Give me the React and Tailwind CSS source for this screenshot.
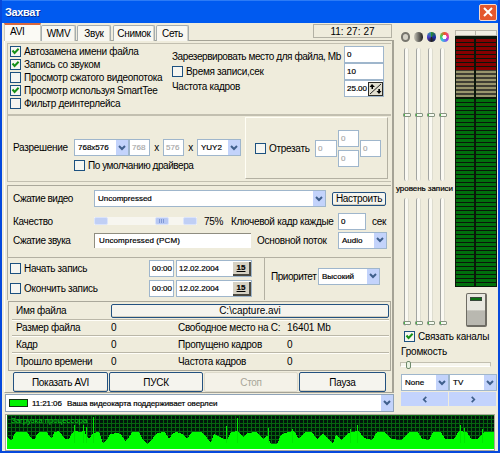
import React from 'react';
import clsx from 'clsx';

const Check = ({ on, className }) => (
    <div className={clsx('w-[11px] h-[11px] shrink-0 border border-[#1c5180] bg-[#f6f6f1]', className)}>
        {on && (
            <svg viewBox="0 0 9 9" className="block w-[9px] h-[9px]">
                <path d="M1.5 3.5 L3.6 6 L7.6 1.8" fill="none" stroke="#169016" strokeWidth="2" />
            </svg>
        )}
    </div>
);

const Label = ({ className, children }) => (
    <span className={clsx('block shrink-0 whitespace-nowrap', className)}>{children}</span>
);

const Field = ({ className, children }) => (
    <div className={clsx('shrink-0 border border-[#9fb6cc] bg-white whitespace-nowrap text-[8px] tracking-normal [-webkit-text-stroke:0.2px] flex items-center pl-[2px]', className)}>
        {children}
    </div>
);

const Arrow = ({ className }) => (
    <div className={clsx('w-[12px] shrink-0 self-stretch bg-[#c3d3fb] flex items-center justify-center', className)}>
        <svg viewBox="0 0 8 6" className="w-[8px] h-[6px]">
            <path d="M1 1 L4 4 L7 1" fill="none" stroke="#3f5f8c" strokeWidth="2" />
        </svg>
    </div>
);

const Combo = ({ className, children }) => (
    <div className={clsx('shrink-0 border border-[#9fb6cc] bg-white flex items-center justify-between pl-[3px] text-[8px] tracking-normal [-webkit-text-stroke:0.2px] whitespace-nowrap', className)}>
        <span>{children}</span>
        <Arrow />
    </div>
);

const Button = ({ className, disabled, children }) => (
    <div
        className={clsx(
            'shrink-0 flex items-center justify-center rounded-[2px] border whitespace-nowrap',
            disabled ? 'border-[#dddacb] bg-[#f4f2e8] text-[#a8a698]' : 'border-[#235180] bg-[#f5f4ee] shadow-[inset_0_-1px_0_#d3cfc0]',
            className
        )}
    >
        {children}
    </div>
);

const Tab = ({ className, children }) => (
    <div className={clsx('h-[16px] shrink-0 rounded-t-[2px] border border-b-0 border-[#a5adb0] bg-[#f8f7f1] flex items-center justify-center shadow-[inset_-1px_0_0_#d6d4c8]', className)}>
        {children}
    </div>
);

const DateRow = ({ label, className }) => (
    <div className={clsx('flex items-center h-[17px]', className)}>
        <Check className="ml-[2px]" />
        <Label className="ml-[3px] w-[125px]">{label}</Label>
        <Field className="w-[25px] h-[17px] pl-[1px]">00:00</Field>
        <Field className="ml-[2px] w-[76px] h-[17px] justify-between">
            <span>12.02.2004</span>
            <span className="w-[18px] h-[14px] bg-[#d5d1c4] border-r-2 border-b-2 border-[#4c4a42] flex items-center justify-center text-[8px] font-bold underline">
                15
            </span>
        </Field>
    </div>
);

const StatRow = ({ name, value, name2, value2, className }) => (
    <div className={clsx('flex items-center ml-[3px] w-[377px] border-t border-[#bab7a8] shadow-[inset_0_1px_0_#fffef8]', className)}>
        <Label className="ml-[4px] w-[95px]">{name}</Label>
        <Label className="w-[67px]">{value}</Label>
        <Label className="w-[109px]">{name2}</Label>
        <Label className="tracking-[-0.1px]">{value2}</Label>
    </div>
);

const Track = ({ thumb, className }) => (
    <div className={clsx('w-[5px] flex flex-col items-center rounded-[2px] border-l border-l-[#a3a5a2] border-r border-r-[#dddccf] bg-[#faf9f2]', className)}>
        <div className={clsx('w-[8px] h-[4px] shrink-0 rounded-[1px] border border-[#879482] bg-[#f6faf0] shadow-[inset_1px_0_0_#49b749]', thumb)} />
    </div>
);

const Meter = () => (
    <svg viewBox="0 0 42 257" shapeRendering="crispEdges" className="block w-[42px] h-[257px]">
        <rect width="42" height="257" fill="#0a160a" />
        <rect width="42" height="6" fill="#b8b6a8" />
        <rect x="1" y="1" width="19" height="4" fill="#f1efe2" />
        <rect x="21" y="1" width="20" height="4" fill="#f1efe2" />
        <rect x="1" y="38" width="18" height="28" fill="#3f3e33" />
        <rect x="21" y="38" width="20" height="28" fill="#3f3e33" />
        {Array.from({ length: 62 }, (_, i) => {
            const y = 9 + i * 4;
            const olive = y > 37 && y < 66;
            const fill = y < 38 ? '#860000' : olive ? '#98956c' : '#00700c';
            return (
                <g key={i} fill={fill}>
                    <rect x="1" y={y} width="18" height={olive ? 2 : 3} />
                    <rect x="21" y={y} width="20" height={olive ? 2 : 3} />
                </g>
            );
        })}
    </svg>
);

// x, y pairs of the cpu load curve
const load = [
    0, 22, 3, 25, 6, 24, 7, 19, 10, 17, 20, 17, 22, 20, 25, 24, 28, 24, 30, 19, 33, 17, 40, 17, 43, 22, 45, 24, 47, 17, 52, 16, 55, 20,
    58, 24, 62, 24, 65, 18, 68, 16, 74, 17, 77, 14, 79, 20, 82, 24, 86, 18, 92, 17, 96, 28, 100, 25, 103, 19, 110, 18, 114, 19, 118, 26,
    121, 24, 125, 17, 132, 17, 136, 25, 141, 29, 146, 23, 150, 18, 158, 17, 162, 24, 166, 18, 170, 17, 175, 19, 180, 24, 185, 17, 195, 17,
    200, 23, 204, 28, 207, 19, 213, 22, 220, 25, 224, 17, 231, 16, 236, 22, 240, 18, 250, 17, 256, 24, 260, 20, 264, 29, 270, 29, 274, 20,
    281, 17, 287, 16, 292, 24, 298, 17, 305, 17, 310, 24, 316, 19, 321, 24, 326, 28, 329, 20, 335, 25, 340, 19, 344, 17, 352, 16, 357, 23,
    365, 25, 370, 17, 378, 17, 384, 24, 394, 25, 400, 20, 402, 17, 411, 17, 415, 24, 422, 25, 426, 17, 434, 17, 438, 24, 447, 24, 452, 16,
    460, 17, 464, 24, 470, 24, 474, 20, 478, 17, 487, 17,
];
const spikes = [[67, 10], [76, 10], [79, 12], [86, 2], [219, 11], [230, 3], [261, 13], [285, 14], [343, 14], [350, 10], [453, 10], [457, 13], [475, 14]];

const Load = () => {
    const points = [];
    for (let i = 0; i < load.length; i += 2) points.push(`${load[i]},${load[i + 1]}`);
    return (
        <svg viewBox="0 0 487 34" shapeRendering="crispEdges" className="block w-[487px] h-[34px]">
            <defs>
                <pattern id="grid" width="4" height="4" patternUnits="userSpaceOnUse">
                    <rect width="4" height="4" fill="#00160a" />
                    <path d="M0 0.5 H4 M0.5 0 V4" stroke="#06640f" />
                </pattern>
            </defs>
            <rect width="487" height="34" fill="url(#grid)" />
            <polygon points={`0,34 ${points.join(' ')} 487,34`} fill="#00fc00" />
            {spikes.map(([x, y]) => (
                <rect key={x} x={x} y={y} width="1" height={28 - y} fill="#00e800" />
            ))}
        </svg>
    );
};

const Tabs = () => (
    <div className="flex items-end h-[18px] pl-[2px] text-[10px]">
        <div className="w-[37px] h-[18px] shrink-0 border-t-2 border-t-[#d9673d] border-x border-x-[#c5c8c0] bg-[#fbfaf5] pl-[5px] leading-[14px]">AVI</div>
        <Tab className="w-[35px]">WMV</Tab>
        <Tab className="w-[34px] ml-[1px]">Звук</Tab>
        <Tab className="w-[42px] ml-[2px]">Снимок</Tab>
        <Tab className="w-[33px] ml-[1px]">Сеть</Tab>
        <div className="ml-[124px] mb-[3px] w-[79px] h-[14px] border border-[#b3b1a4] flex items-center justify-center tracking-[0.05px]">11: 27: 27</div>
    </div>
);

const FileOptions = () => (
    <div className="ml-[3px] w-[384px] h-[72px] border border-[#c2bfb0] border-r-0 flex pt-[1px]">
        <div className="pl-[2px] w-[164px]">
            {[
                ['Автозамена имени файла', true],
                ['Запись со звуком', true],
                ['Просмотр сжатого видеопотока', false],
                ['Просмотр используя SmartTee', true],
                ['Фильтр деинтерлейса', false],
            ].map(([text, on]) => (
                <div key={text} className="flex items-center h-[13px]">
                    <Check on={on} />
                    <Label className="ml-[3px] tracking-[-0.28px]">{text}</Label>
                </div>
            ))}
        </div>
        <div className="w-[172px] pt-[4px]">
            <Label className="h-[15px] leading-[15px] tracking-[-0.42px]">Зарезервировать место для файла, Mb</Label>
            <div className="flex items-center h-[15px]">
                <Check />
                <Label className="ml-[3px]">Время записи,сек</Label>
            </div>
            <Label className="h-[15px] leading-[15px]">Частота кадров</Label>
        </div>
        <div className="pt-[1px]">
            <Field className="w-[40px] h-[17px]">0</Field>
            <Field className="w-[40px] h-[17px]">10</Field>
            <Field className="w-[40px] h-[17px] justify-between">
                25.00
                <svg viewBox="0 0 15 14" className="w-[15px] h-[14px]">
                    <rect width="15" height="14" fill="#2e2d28" />
                    <rect width="13" height="12" x="1" y="1" fill="#e2dfd0" />
                    <path d="M2 12 L13 2" stroke="#222" />
                    <path d="M4 2 L1.5 5 H3.5 V7 H5 V5 H7 Z M11 12 L8.5 9 H10.3 V7 H12 V9 H13.5 Z" fill="#000" />
                </svg>
            </Field>
        </div>
    </div>
);

const Resolution = () => (
    <div className="ml-[3px] w-[384px] h-[67px] border-y border-l border-[#c2bfb0] flex">
        <div className="w-[237px] pt-[23px] pl-[5px]">
            <div className="flex items-center h-[17px]">
                <Label className="w-[61px]">Разрешение</Label>
                <Combo className="w-[55px] h-[17px]">768x576</Combo>
                <Field className="w-[21px] h-[17px] text-[#aaa]">768</Field>
                <Label className="w-[13px] text-center">x</Label>
                <Field className="w-[21px] h-[17px] text-[#aaa]">576</Field>
                <Label className="w-[13px] text-center">x</Label>
                <Combo className="w-[44px] h-[17px]">YUY2</Combo>
            </div>
            <div className="flex items-center h-[19px] pl-[61px]">
                <Check />
                <Label className="ml-[3px] tracking-[-0.45px]">По умолчанию драйвера</Label>
            </div>
        </div>
        <div className="mt-[1px] w-[143px] h-[62px] border border-[#b3b0a2] border-t-[#fffef5] border-l-[#fffef5] flex items-center pl-[9px]">
            <Check />
            <Label className="ml-[3px] w-[46px]">Отрезать</Label>
            <Field className="w-[22px] h-[17px] text-[#aaa]">0</Field>
            <div className="flex flex-col gap-[3px] ml-[1px]">
                <Field className="w-[21px] h-[17px] text-[#aaa]">0</Field>
                <Field className="w-[21px] h-[17px] text-[#aaa]">0</Field>
            </div>
            <Field className="ml-[1px] w-[21px] h-[17px] text-[#aaa]">0</Field>
        </div>
    </div>
);

const Compression = () => (
    <div className="ml-[3px] w-[384px] h-[72px] mt-[3px] border-t border-l border-[#aaa89b] pl-[5px] pt-[4px]">
        <div className="flex items-center h-[17px]">
            <Label className="w-[81px] tracking-[-0.5px]">Сжатие видео</Label>
            <Combo className="w-[232px] h-[17px]">Uncompressed</Combo>
            <Button className="ml-[6px] w-[54px] h-[14px]">Настроить</Button>
        </div>
        <div className="flex items-center h-[18px] mt-[5px]">
            <Label className="w-[81px]">Качество</Label>
            <div className="w-[103px] h-[8px] bg-[#f7f6f0] flex justify-between">
                <div className="w-[14px] rounded-[2px] bg-[#c0cff5] border border-[#dbe4fb]" />
                <div className="w-[14px] ml-[32px] rounded-[2px] bg-[#b7c8f3] border border-[#dbe4fb] flex items-center justify-center gap-[1px]">
                    <i className="w-px h-[4px] bg-[#8199d8]" />
                    <i className="w-px h-[4px] bg-[#8199d8]" />
                    <i className="w-px h-[4px] bg-[#8199d8]" />
                </div>
                <div className="w-[14px] rounded-[2px] bg-[#c0cff5] border border-[#dbe4fb]" />
            </div>
            <Label className="ml-[7px] w-[27px]">75%</Label>
            <Label className="w-[107px]">Ключевой кадр каждые</Label>
            <Field className="w-[28px] h-[17px]">0</Field>
            <Label className="ml-[6px]">сек</Label>
        </div>
        <div className="flex items-center h-[18px] mt-[1px]">
            <Label className="w-[81px] tracking-[-0.45px]">Сжатие звука</Label>
            <div className="w-[157px] h-[15px] bg-white border-t border-l border-[#8f8d80] pl-[4px] text-[8px] tracking-[0.1px] [-webkit-text-stroke:0.2px] leading-[14px]">Uncompressed (PCM)</div>
            <Label className="ml-[6px] w-[81px]">Основной поток</Label>
            <Combo className="w-[49px] h-[17px]">Audio</Combo>
        </div>
    </div>
);

const Schedule = () => (
    <div className="ml-[3px] w-[384px] h-[43px] border-t border-l border-[#b3b0a2] flex">
        <div className="w-[256px] pt-[2px]">
            <DateRow label="Начать запись" />
            <DateRow label="Окончить запись" className="mt-[3px]" />
        </div>
        <div className="flex items-center border-l border-[#b3b0a2] pl-[6px] pb-[6px]">
            <Label className="w-[47px] tracking-[-0.45px]">Приоритет</Label>
            <Combo className="w-[62px] h-[17px]">Высокий</Combo>
        </div>
    </div>
);

const Stats = () => (
    <div className="ml-[4px] mt-[1px] w-[383px] h-[70px] border border-[#aaa89b]">
        <div className="flex items-center h-[17px] pl-[7px]">
            <Label className="w-[95px]">Имя файла</Label>
            <Button className="w-[278px] h-[14px] tracking-normal">C:\capture.avi</Button>
        </div>
        <StatRow className="h-[16px]" name="Размер файла" value="0" name2="Свободное место на  C:" value2="16401 Mb" />
        <StatRow className="h-[17px]" name="Кадр" value="0" name2="Пропущено кадров" value2="0" />
        <StatRow className="h-[18px]" name="Прошло времени" value="0" name2="Частота кадров" value2="0" />
    </div>
);

const Mixer = () => (
    <div className="w-[103px] shrink-0 flex flex-col">
        <div className="flex h-[304px]">
            <div className="w-[59px] shrink-0 pt-[8px]">
                <div className="flex gap-[4px] pl-[6px] h-[12px] items-center">
                    <i className="w-[9px] h-[10px] rounded-full border-2 border-[#77766e] bg-[#d5d3c8]" />
                    <i className="w-[9px] h-[10px] rounded-full bg-linear-to-r from-[#c9c7ba] to-[#222]" />
                    <i className="w-[9px] h-[10px] rounded-full bg-[conic-gradient(#278a35,#1c2fae,#222,#4a3fd0,#2a9a9a)]" />
                    <i className="w-[9px] h-[10px] rounded-full bg-[radial-gradient(#fff_30%,transparent_35%),conic-gradient(#ef5a2a,#e8389a,#7d4ff0,#35c1e0,#49cf4a,#ef5a2a)]" />
                </div>
                <div className="flex gap-[7px] pl-[9px] mt-[5px]">
                    {[0, 1, 2, 3].map((i) => (
                        <Track key={i} className="h-[133px]" thumb="mt-[65px]" />
                    ))}
                </div>
                <Label className="pl-px text-[8px] tracking-[-0.05px] [-webkit-text-stroke:0.2px] leading-[16px] h-[17px]">уровень записи</Label>
                <div className="flex gap-[7px] pl-[9px]">
                    {[0, 1, 2, 3].map((i) => (
                        <Track key={i} className="h-[128px]" thumb="mt-[123px]" />
                    ))}
                </div>
            </div>
            <div className="pt-[7px] pl-[1px]">
                <Meter />
                <div className="mt-[6px] ml-[11px] w-[21px] h-[34px] rounded-[2px] border border-[#6e6c64] border-r-2 border-b-2 bg-linear-to-b from-[#e8e7df] from-50% to-[#b9b8b0] to-55% pt-[3px]">
                    <div className="mx-auto w-[12px] h-[4px] bg-[#0b7012] border border-[#37463a]" />
                </div>
            </div>
        </div>
        <div className="flex items-center h-[18px] pl-[9px]">
            <Check on />
            <Label className="ml-[3px] tracking-[-0.25px]">Связать каналы</Label>
        </div>
        <Label className="pl-[6px] h-[14px] leading-[14px] tracking-[-0.2px]">Громкость</Label>
        <div className="ml-[5px] mt-[3px] w-[91px] h-[5px] border border-[#c2bfb0] border-b-[#fff] bg-[#f7f6ee] flex items-center">
            <div className="ml-[5px] w-[5px] h-[8px] shrink-0 rounded-[2px] border border-[#6f8a6c] bg-[#e9f3e2]" />
        </div>
        <div className="flex mt-[7px] ml-[6px]">
            <Combo className="w-[48px] h-[17px]">None</Combo>
            <Combo className="w-[48px] h-[17px]">TV</Combo>
        </div>
        <div className="flex gap-px ml-[6px] mt-[1px] w-[95px] h-[14px]">
            {['M5 1 L2 4 L5 7', 'M2 1 L5 4 L2 7'].map((d) => (
                <div key={d} className="flex-1 bg-[#c3d3fd] flex items-center justify-center">
                    <svg viewBox="0 0 7 8" className="w-[6px] h-[7px]">
                        <path d={d} fill="none" stroke="#3f5f8c" strokeWidth="2" />
                    </svg>
                </div>
            ))}
        </div>
    </div>
);

const App = () => (
    <div className="w-[500px] h-[453px] overflow-hidden bg-[#efecdc] flex flex-col border-l-2 border-r-2 border-b-2 border-[#0649dc] text-black text-[10px] leading-[13px] tracking-[-0.3px] font-['Liberation_Sans',sans-serif]">
        <div className="h-[23px] shrink-0 bg-[#005af0] border-t border-[#2c7bf6] flex items-center justify-between pl-[3px] pr-px">
            <span className="text-white font-bold text-[11px] tracking-[-0.35px] [text-shadow:1px_1px_0_#0b2f93]">Захват</span>
            <div className="w-[18px] h-[17px] rounded-[2px] border border-[#f5d9cd] bg-[#e4572e] flex items-center justify-center">
                <svg viewBox="0 0 10 10" className="w-[10px] h-[10px]">
                    <path d="M1 1 L9 9 M9 1 L1 9" stroke="#fff" strokeWidth="2" />
                </svg>
            </div>
        </div>
        <div className="flex h-[390px] shrink-0">
            <div className="w-[393px] shrink-0">
                <Tabs />
                <div className="ml-[2px] w-[390px] h-[353px] border border-[#a5a396] border-l-[#fff] border-r-2 pt-[2px] -mt-px">
                    <div className="-ml-px">
                        <FileOptions />
                        <Resolution />
                        <Compression />
                        <Schedule />
                        <Stats />
                        <div className="flex gap-px ml-[9px] mt-[1px]">
                            <Button className="w-[95px] h-[20px]">Показать AVI</Button>
                            <Button className="w-[94px] h-[20px]">ПУСК</Button>
                            <Button className="w-[94px] h-[20px]" disabled>Стоп</Button>
                            <Button className="w-[87px] h-[20px]">Пауза</Button>
                        </div>
                    </div>
                </div>
                <div className="ml-[3px] mt-[1px] w-[389px] h-[18px] border border-[#8fa3b8] bg-white flex items-center pl-[3px] text-[8px] tracking-[-0.1px] [-webkit-text-stroke:0.2px]">
                    <div className="w-[19px] h-[8px] bg-[#00f000] border border-[#123312]" />
                    <Label className="ml-[4px] w-[35px]">11:21:06</Label>
                    <Label>Ваша видеокарта поддерживает оверлеи</Label>
                    <Arrow className="ml-auto" />
                </div>
            </div>
            <Mixer />
        </div>
        <div className="relative mt-[1px] ml-[3px] w-[490px] h-[37px] border border-[#aaa89b] bg-white pl-px">
            <Load />
            <span className="absolute left-[5px] top-[1px] text-[8px] leading-[9px] tracking-[-0.1px] whitespace-nowrap text-[#0ad01a]">Загрузка процессора</span>
        </div>
    </div>
);

export default App;
